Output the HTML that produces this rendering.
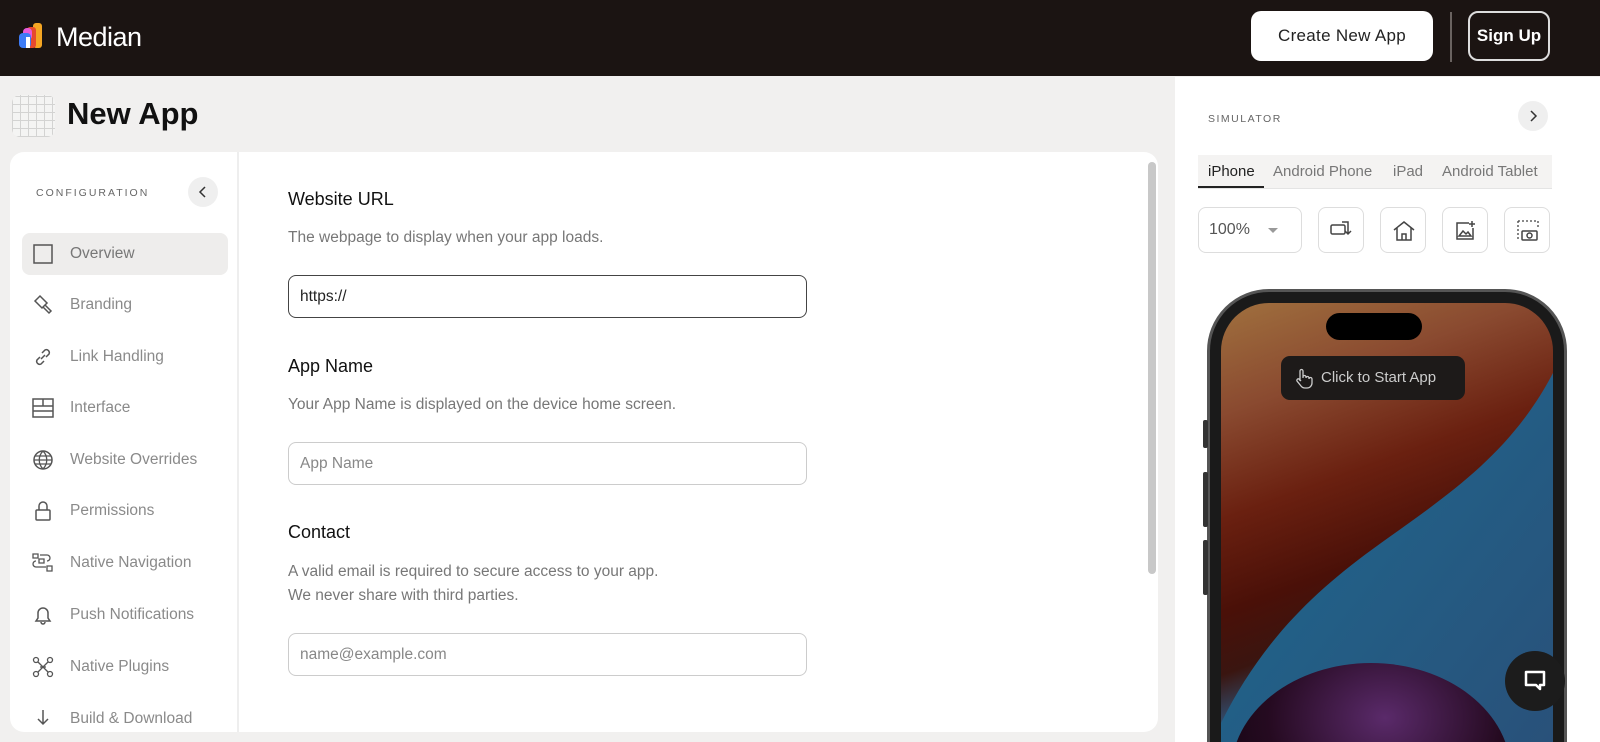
<!DOCTYPE html>
<html><head><meta charset="utf-8"><style>
*{box-sizing:border-box;margin:0;padding:0}
html,body{width:1600px;height:742px;overflow:hidden}
body{background:#f1f0ef;font-family:"Liberation Sans",sans-serif;color:#111}
#w{position:relative;width:1600px;height:742px;overflow:hidden}
.hdr{position:absolute;left:0;top:0;width:1600px;height:76px;background:#1b1412}
.logo{position:absolute;left:56px;top:22px;color:#fff;font-size:27px;letter-spacing:-0.5px}
.btn1{position:absolute;left:1251px;top:11px;width:182px;height:50px;background:#fff;border-radius:10px;font-size:17px;color:#222;text-align:center;line-height:50px;letter-spacing:.3px}
.sep{position:absolute;left:1450px;top:12px;width:2px;height:50px;background:#6a6360}
.btn2{position:absolute;left:1468px;top:11px;width:82px;height:50px;border:2px solid #ddd;border-radius:10px;color:#fff;font-weight:bold;font-size:17px;text-align:center;line-height:46px}
.title{position:absolute;left:67px;top:96px;font-size:31px;font-weight:bold;color:#111}
.appicon{position:absolute;left:12px;top:95px;width:43px;height:42px;border-radius:8px;background:
repeating-linear-gradient(0deg,#ccc 0 1px,transparent 1px 8px),repeating-linear-gradient(90deg,#ccc 0 1px,transparent 1px 8px),#f5f5f5;opacity:.8}
.card{position:absolute;left:10px;top:152px;width:1148px;height:580px;background:#fff;border-radius:14px}
.side{position:absolute;left:10px;top:152px;width:229px;height:580px;border-right:2px solid #eee}
.cfg{position:absolute;left:36px;top:187px;font-size:10.5px;letter-spacing:2px;color:#666}
.circ{position:absolute;width:30px;height:30px;border-radius:50%;background:#efefef}
.item{position:absolute;left:22px;width:206px;height:42px;border-radius:8px;font-size:15.5px;color:#8a8a8a;line-height:42px;padding-left:48px}
.item svg{position:absolute;left:10px;top:10px}
.sel{background:#eeedec;color:#777}
.lbl{position:absolute;left:288px;font-size:18px;color:#111}
.desc{position:absolute;left:288px;font-size:15.5px;color:#777;line-height:24px}
.inp{position:absolute;left:288px;width:519px;height:43px;border:1px solid #ccc;border-radius:8px;font-size:15.5px;color:#888;line-height:41px;padding-left:11px}
.scroll{position:absolute;left:1148px;top:162px;width:8px;height:412px;border-radius:4px;background:#c8c8c8}
.right{position:absolute;left:1175px;top:77px;width:425px;height:665px;background:#fff}
.sim{position:absolute;left:1208px;top:113px;font-size:10.5px;letter-spacing:1.5px;color:#666}
.tabs{position:absolute;left:1198px;top:155px;width:354px;height:34px;background:#f4f3f2;border-bottom:1px solid #e4e4e4}
.tab{position:absolute;top:163px;font-size:15px;color:#777}
.tb{position:absolute;top:207px;height:46px;border:1px solid #ddd;border-radius:8px;background:#fff}
.phone{position:absolute;left:1207px;top:289px;width:360px;height:520px;border-radius:62px;background:#1a1a1a;border:3px solid #555}
.screen{position:absolute;left:1221px;top:303px;width:332px;height:500px;border-radius:48px;overflow:hidden;
background:linear-gradient(160deg,#a0703e 0%,#8a4a30 18%,#6a2010 35%,#4a1008 50%,#3a1510 60%,#2d5d8a 70%,#3b6e90 100%)}
.island{position:absolute;left:1326px;top:313px;width:96px;height:27px;border-radius:14px;background:#000}
.start{position:absolute;left:1281px;top:356px;width:184px;height:44px;border-radius:9px;background:#1d1a19;color:#ccc;font-size:15px;line-height:44px;padding-left:40px}
.chat{position:absolute;left:1505px;top:651px;width:60px;height:60px;border-radius:50%;background:#1c1c1c}
</style></head><body><div id="w">
<div class="hdr"></div>
<svg style="position:absolute;left:18px;top:22px" width="28" height="28" viewBox="0 0 28 28"><rect x="15" y="1" width="9" height="25" rx="3" fill="#f5a623"/><rect x="9" y="5" width="9" height="21" rx="3" fill="#e64a2e"/><rect x="5" y="6" width="9" height="12" rx="4" fill="#e85ad8"/><rect x="1" y="11" width="12" height="15" rx="4" fill="#3d7bf5"/><rect x="8" y="15" width="4" height="11" fill="#fff"/></svg>
<div class="logo">Median</div>
<div class="btn1">Create New App</div><div class="sep"></div><div class="btn2">Sign Up</div>
<div class="appicon"></div><div class="title">New App</div>
<div class="card"></div><div class="side"></div>
<div class="cfg">CONFIGURATION</div>
<div class="circ" style="left:188px;top:177px"></div>
<svg style="position:absolute;left:196px;top:185px" width="14" height="14"><path d="M9 2 4 7l5 5" fill="none" stroke="#333" stroke-width="1.5"/></svg>
<div class="item sel" style="top:233px"><svg width="22" height="22"><rect x="2" y="2" width="18" height="18" fill="none" stroke="#555" stroke-width="1.5"/></svg>Overview</div>
<div class="item" style="top:284px"><svg width="22" height="22"><path d="M3 7l5-5 7 7-5 5zM11 13l6 6 2-2-6-6" fill="none" stroke="#555" stroke-width="1.5"/></svg>Branding</div>
<div class="item" style="top:336px"><svg width="22" height="22"><path d="M9 13l4-4M8 11l-3 3a3 3 0 004 4l3-3M14 11l3-3a3 3 0 00-4-4l-3 3" fill="none" stroke="#555" stroke-width="1.5"/></svg>Link Handling</div>
<div class="item" style="top:387px"><svg width="22" height="22"><path d="M1 2h20v18H1zM1 9h20M1 14h20M11 2v7" fill="none" stroke="#555" stroke-width="1.5"/></svg>Interface</div>
<div class="item" style="top:439px"><svg width="22" height="22"><circle cx="11" cy="11" r="9" fill="none" stroke="#555" stroke-width="1.5"/><path d="M2 11h18M11 2c-5 5-5 13 0 18M11 2c5 5 5 13 0 18M3 7h16M3 15h16" fill="none" stroke="#555" stroke-width="1.3"/></svg>Website Overrides</div>
<div class="item" style="top:490px"><svg width="22" height="22"><rect x="4" y="10" width="14" height="10" rx="1" fill="none" stroke="#555" stroke-width="1.5"/><path d="M7 10V6a4 4 0 018 0v4" fill="none" stroke="#555" stroke-width="1.5"/></svg>Permissions</div>
<div class="item" style="top:542px"><svg width="22" height="22"><path d="M1 2h5v4H1zM7 7h5v4H7zM15 14h5v5h-5zM8 3h7a3 3 0 010 6M4 9a3 3 0 000 6h10" fill="none" stroke="#555" stroke-width="1.3"/></svg>Native Navigation</div>
<div class="item" style="top:594px"><svg width="22" height="22"><path d="M4 17h14l-2-3V9a5 5 0 00-10 0v5zM9 18a2 2 0 004 0" fill="none" stroke="#555" stroke-width="1.5"/></svg>Push Notifications</div>
<div class="item" style="top:646px"><svg width="22" height="22"><circle cx="4" cy="4" r="2.5" fill="none" stroke="#555" stroke-width="1.3"/><circle cx="18" cy="4" r="2.5" fill="none" stroke="#555" stroke-width="1.3"/><circle cx="4" cy="18" r="2.5" fill="none" stroke="#555" stroke-width="1.3"/><circle cx="18" cy="18" r="2.5" fill="none" stroke="#555" stroke-width="1.3"/><path d="M6 6l10 10M16 6L6 16M8 11h6" fill="none" stroke="#555" stroke-width="1.3"/></svg>Native Plugins</div>
<div class="item" style="top:698px;height:34px;overflow:hidden"><svg width="22" height="22"><path d="M11 2v14M6 11l5 5 5-5" fill="none" stroke="#555" stroke-width="1.5"/></svg>Build &amp; Download</div>
<div class="lbl" style="top:189px">Website URL</div>
<div class="desc" style="top:226px">The webpage to display when your app loads.</div>
<div class="inp" style="top:275px;border-color:#444;color:#222">https://</div>
<div class="lbl" style="top:356px">App Name</div>
<div class="desc" style="top:393px">Your App Name is displayed on the device home screen.</div>
<div class="inp" style="top:442px">App Name</div>
<div class="lbl" style="top:522px">Contact</div>
<div class="desc" style="top:560px">A valid email is required to secure access to your app.<br>We never share with third parties.</div>
<div class="inp" style="top:633px">name@example.com</div>
<div class="scroll"></div>
<div class="right"></div>
<div class="sim">SIMULATOR</div>
<div class="circ" style="left:1518px;top:101px"></div>
<svg style="position:absolute;left:1526px;top:109px" width="14" height="14"><path d="M5 2l5 5-5 5" fill="none" stroke="#333" stroke-width="1.5"/></svg>
<div class="tabs"></div>
<div style="position:absolute;left:1198px;top:186px;width:66px;height:2px;background:#222"></div>
<div class="tab" style="left:1208px;color:#222">iPhone</div>
<div class="tab" style="left:1273px">Android Phone</div>
<div class="tab" style="left:1393px">iPad</div>
<div class="tab" style="left:1442px">Android Tablet</div>
<div class="tb" style="left:1198px;width:104px"><span style="position:absolute;left:10px;top:13px;font-size:16px;color:#555">100%</span><svg style="position:absolute;left:68px;top:19px" width="12" height="8"><path d="M1 1h10L6 6z" fill="#999"/></svg></div>
<div class="tb" style="left:1318px;width:46px"><svg style="position:absolute;left:11px;top:12px" width="24" height="20"><rect x="1" y="5" width="14" height="9" rx="1.5" fill="none" stroke="#444" stroke-width="1.5"/><path d="M12 2h6v12M15 11l3 3 3-3" fill="none" stroke="#444" stroke-width="1.5"/></svg></div>
<div class="tb" style="left:1380px;width:46px"><svg style="position:absolute;left:11px;top:11px" width="24" height="24"><path d="M2 11L12 3l10 8M5 9v12h14V9M10 21v-6h4v6" fill="none" stroke="#444" stroke-width="1.5"/></svg></div>
<div class="tb" style="left:1442px;width:46px"><svg style="position:absolute;left:12px;top:11px" width="24" height="24"><path d="M14 4H2v16h16V9M17 2v6M14 5h6M4 17l4-5 3 3 2-2 3 4z" fill="none" stroke="#444" stroke-width="1.5"/></svg></div>
<div class="tb" style="left:1504px;width:46px"><svg style="position:absolute;left:11px;top:11px" width="24" height="24"><path d="M2 2h20M2 2v20M22 2v8" fill="none" stroke="#444" stroke-width="1.3" stroke-dasharray="2 2"/><rect x="6" y="12" width="15" height="9" rx="1" fill="none" stroke="#444" stroke-width="1.5"/><circle cx="13.5" cy="16.5" r="2.5" fill="none" stroke="#444" stroke-width="1.5"/></svg></div>
<div class="phone"></div>
<div style="position:absolute;left:1203px;top:420px;width:5px;height:28px;background:#333;border-radius:2px"></div>
<div style="position:absolute;left:1203px;top:472px;width:5px;height:55px;background:#333;border-radius:2px"></div>
<div style="position:absolute;left:1203px;top:540px;width:5px;height:55px;background:#333;border-radius:2px"></div>
<div class="screen">
<svg width="332" height="500" style="position:absolute;left:0;top:0"><defs><linearGradient id="g" x1="0" y1="0" x2="1" y2="1"><stop offset="0" stop-color="#1d6a90"/><stop offset="1" stop-color="#2a4f78"/></linearGradient><radialGradient id="p" cx=".55" cy=".25" r=".7"><stop offset="0" stop-color="#5a2a6a"/><stop offset=".6" stop-color="#250a20"/><stop offset="1" stop-color="#100510"/></radialGradient></defs>
<path d="M332 70 C290 150 230 190 160 240 C90 290 40 340 0 420 V500 H332Z" fill="url(#g)"/>
<ellipse cx="150" cy="470" rx="140" ry="110" fill="url(#p)"/></svg>
</div>
<div class="island"></div>
<div class="start"><svg style="position:absolute;left:12px;top:11px" width="22" height="22"><path d="M7 14V4a1.5 1.5 0 013 0v7M10 10a1.5 1.5 0 013 0v1M13 11a1.5 1.5 0 013 0v1M16 12a1.5 1.5 0 013 0v4a5 5 0 01-5 5h-2a5 5 0 01-4-2l-4-5a1.5 1.5 0 012-2l2 2" fill="none" stroke="#ccc" stroke-width="1.3"/></svg>Click to Start App</div>
<div class="chat"><svg style="position:absolute;left:18px;top:18px" width="24" height="24"><path d="M3 3h18v13h-4v4l-4-4H3z" fill="none" stroke="#fff" stroke-width="2.5" stroke-linejoin="round"/></svg></div>
</div></body></html>
